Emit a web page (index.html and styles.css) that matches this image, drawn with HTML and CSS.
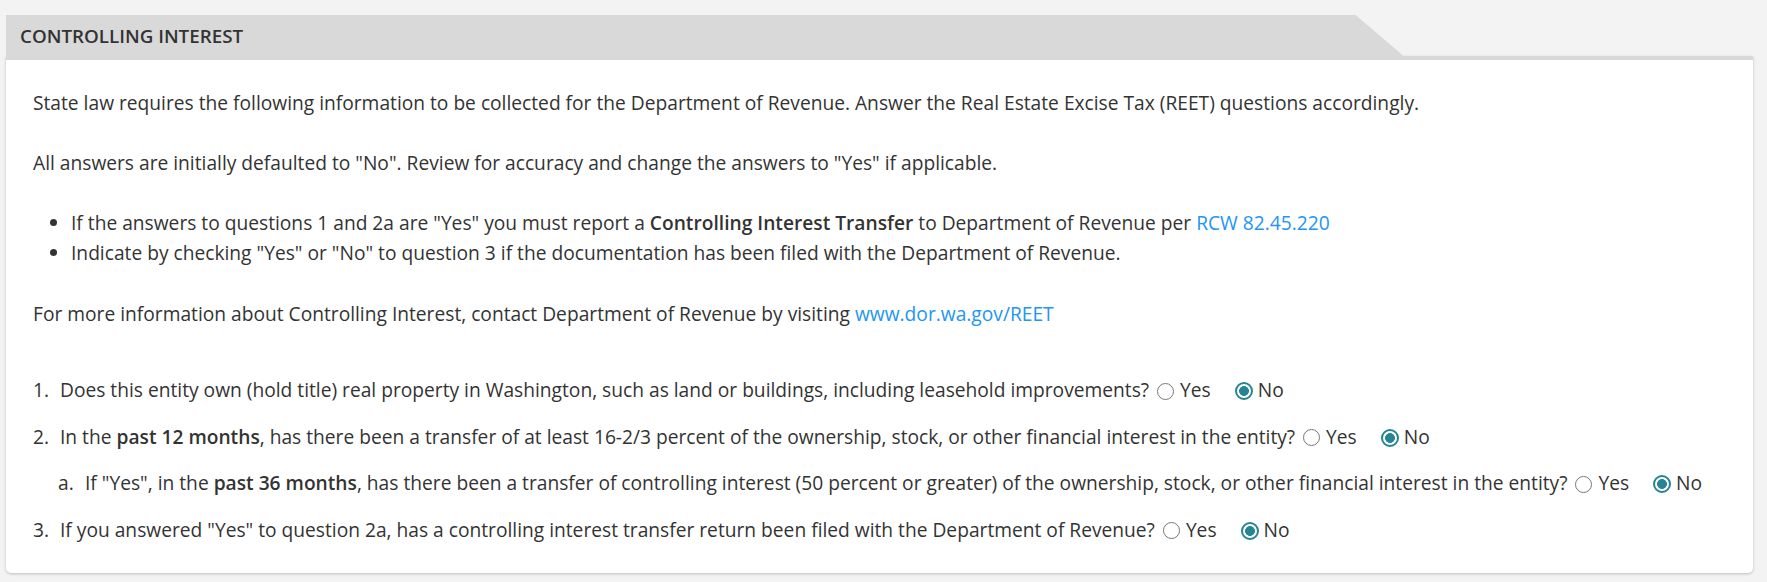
FILE: index.html
```html
<!DOCTYPE html>
<html lang="en">
<head>
<meta charset="utf-8">
<title>Controlling Interest</title>
<link rel="stylesheet" href="styles.css">
</head>
<body>
<div class="page">
  <div class="section">
    <div class="tab"><h2 class="tab-title">CONTROLLING INTEREST</h2></div>
    <div class="panel">
      <p class="para">State law requires the following information to be collected for the Department of Revenue. Answer the Real Estate Excise Tax (REET) questions accordingly.</p>
      <p class="para">All answers are initially defaulted to "No". Review for accuracy and change the answers to "Yes" if applicable.</p>
      <ul class="bullets">
        <li>If the answers to questions 1 and 2a are "Yes" you must report a <strong>Controlling Interest Transfer</strong> to Department of Revenue per <a class="link" href="#">RCW 82.45.220</a></li>
        <li>Indicate by checking "Yes" or "No" to question 3 if the documentation has been filed with the Department of Revenue.</li>
      </ul>
      <p class="para">For more information about Controlling Interest, contact Department of Revenue by visiting <a class="link" href="#">www.dor.wa.gov/REET</a></p>

      <div class="questions">
        <div class="q">
          <span class="num">1.</span>
          <span class="qtext">Does this entity own (hold title) real property in Washington, such as land or buildings, including leasehold improvements? <span class="opts"><label class="opt"><input class="radio" type="radio" name="q1">Yes</label><label class="opt opt-no"><input class="radio" type="radio" name="q1" checked>No</label></span></span>
        </div>
        <div class="q">
          <span class="num">2.</span>
          <span class="qtext">In the <strong>past 12 months</strong>, has there been a transfer of at least 16-2/3 percent of the ownership, stock, or other financial interest in the entity? <span class="opts"><label class="opt"><input class="radio" type="radio" name="q2">Yes</label><label class="opt opt-no"><input class="radio" type="radio" name="q2" checked>No</label></span></span>
        </div>
        <div class="q q-sub">
          <span class="num">a.</span>
          <span class="qtext">If "Yes", in the <strong>past 36 months</strong>, has there been a transfer of controlling interest (50 percent or greater) of the ownership, stock, or other financial interest in the entity? <span class="opts"><label class="opt"><input class="radio" type="radio" name="q2a">Yes</label><label class="opt opt-no"><input class="radio" type="radio" name="q2a" checked>No</label></span></span>
        </div>
        <div class="q">
          <span class="num">3.</span>
          <span class="qtext">If you answered "Yes" to question 2a, has a controlling interest transfer return been filed with the Department of Revenue? <span class="opts"><label class="opt"><input class="radio" type="radio" name="q3">Yes</label><label class="opt opt-no"><input class="radio" type="radio" name="q3" checked>No</label></span></span>
        </div>
      </div>
    </div>
  </div>
</div>
</body>
</html>
```

FILE: styles.css
```css
html, body {
  margin: 0;
  padding: 0;
  background: #f3f3f3;
}

body {
  font-family: "Open Sans", "Noto Sans", "Liberation Sans", sans-serif;
  color: #333333;
  font-size: 19.2px;
  line-height: 30px;
}

.page {
  padding: 15px 14px 9px 6px;
}

.tab {
  width: 80%;
  height: 41px;
  background: #d9d9d9;
  clip-path: polygon(0 0, calc(100% - 48px) 0, 100% 100%, 0 100%);
}

.tab-title {
  margin: 0;
  padding: 1px 0 0 14px;
  font-size: 18.8px;
  font-weight: 600;
  line-height: 41px;
  color: #333333;
}

.panel {
  background: #ffffff;
  border-top: 4px solid #d9d9d9;
  border-radius: 0 0 5px 5px;
  box-shadow: 0 1px 3px rgba(0, 0, 0, 0.22);
  padding: 28px 28px 28px 27px;
}

.para {
  margin: 0 0 30px 0;
}

.bullets {
  margin: 0 0 31px 0;
  padding-left: 38px;
}

.link {
  color: #2196f3;
  text-decoration: none;
}

strong {
  font-weight: 600;
}

.questions {
  margin-top: 46px;
  display: flex;
  flex-direction: column;
  gap: 16.5px;
}

.q {
  display: flex;
}

.q-sub {
  padding-left: 25px;
}

.num {
  flex: 0 0 27px;
}

.opts {
  white-space: nowrap;
}

.opt {
  display: inline;
}

.opt-no {
  margin-left: 22px;
}

.radio {
  appearance: none;
  -webkit-appearance: none;
  box-sizing: border-box;
  width: 17px;
  height: 17px;
  margin: 0 6px 0 3px;
  border: 1.4px solid #777777;
  border-radius: 50%;
  background: #ffffff;
  vertical-align: -2.5px;
}

.radio:checked {
  width: 18px;
  height: 18px;
  margin-left: 2px;
  margin-right: 5px;
  border: 2.2px solid #268493;
  background: radial-gradient(circle, #268493 0, #268493 4.6px, #ffffff 5.2px);
  vertical-align: -3px;
}
```
